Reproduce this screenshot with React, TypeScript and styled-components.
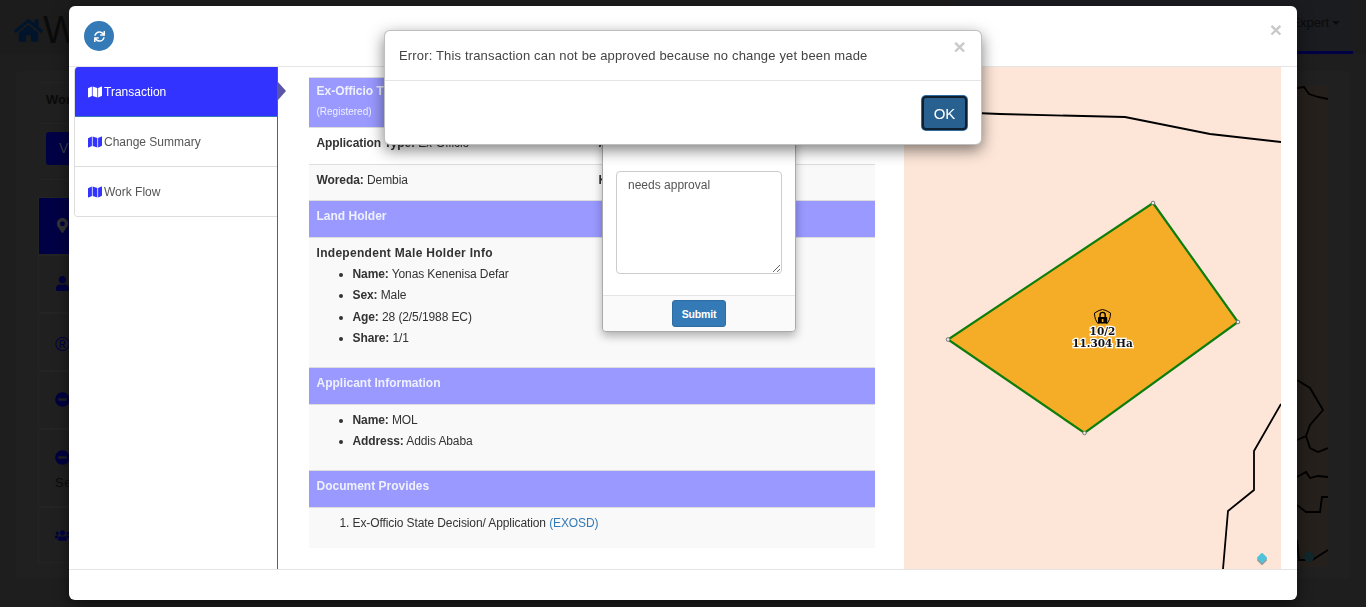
import React from 'react';
import styled, { createGlobalStyle } from 'styled-components';
import {
  FaHome,
  FaMap,
  FaMapMarkerAlt,
  FaMinusCircle,
  FaSync,
  FaUser,
  FaUsers,
} from 'react-icons/fa';

const GlobalStyle = createGlobalStyle`
  html, body {
    margin: 0;
    height: 100%;
    background: #1e1e1e;
    font-family: "Liberation Sans", Arial, sans-serif;
    font-size: 12px;
    color: #333;
  }
  * { box-sizing: border-box; }
`;

/* page behind the dialogs, dimmed */
const Page = styled.div`
  height: 100vh;
  overflow: hidden;
  display: flex;
  flex-direction: column;
`;

const TopBar = styled.div`
  height: 54px;
  flex: none;
  display: flex;
  justify-content: space-between;
  background: #1c1c1c;
  padding: 0 13px 0 14px;
`;

const Brand = styled.div`
  display: flex;
  align-items: center;
  color: #0b0b0b;
  font-size: 38px;
  line-height: 1;
  padding-top: 6px;
  svg { color: #00152b; font-size: 29px; }
`;

const UserMenu = styled.div`
  display: flex;
  align-items: center;
  justify-content: flex-end;
  width: 400px;
  background: #1a1c20;
  border-bottom: 3px solid #000045;
  color: #0b0b0b;
  font-size: 13px;
  padding: 0 13px 6px 0;
  gap: 3px;
`;

const Caret = styled.span`
  width: 0;
  height: 0;
  border-left: 4px solid transparent;
  border-right: 4px solid transparent;
  border-top: 4px solid #0b0b0b;
`;

const PageCard = styled.div`
  flex: none;
  height: 507px;
  margin: 17px 16px 0;
  padding: 11px 22px;
  background: #202020;
  border-radius: 4px;
  display: flex;
  justify-content: space-between;
`;

const PageLeft = styled.div`
  width: 500px;
`;

const PageTitle = styled.div`
  height: 41px;
  border-top: 1px solid #242424;
  padding: 9px 8px;
  font-size: 13px;
  font-weight: bold;
  color: #0b0b0b;
`;

const PageTools = styled.div`
  height: 57px;
  border-top: 1px solid #242424;
  border-bottom: 1px solid #242424;
  padding: 8px;
`;

const PageButton = styled.div`
  width: 80px;
  height: 33px;
  background: #000045;
  border-radius: 3px;
  color: #3a3a4a;
  font-size: 14px;
  line-height: 33px;
  padding-left: 13px;
`;

const SideList = styled.div`
  margin-top: 17px;
`;

const SideRow = styled.div<{ $h: number; $active?: boolean }>`
  height: ${(p) => p.$h}px;
  background: ${(p) => (p.$active ? '#000045' : '#202020')};
  border: 1px solid #242424;
  padding: 20px 16px 0;
  color: ${(p) => (p.$active ? '#333' : '#000040')};
  font-size: 15px;
  display: flex;
  flex-wrap: wrap;
  align-content: flex-start;
`;

const RegMark = styled.span`
  font-size: 20px;
  line-height: 1;
`;

const SideNote = styled.div`
  width: 100%;
  margin-top: 10px;
  font-size: 13px;
  letter-spacing: 0.5px;
  color: #0b0b0b;
`;

const PageMap = styled.div`
  width: 428px;
  height: 481px;
  margin-top: 4px;
  background: #25201c;
  svg { display: block; }
`;

/* big transaction dialog */
const Modal = styled.div`
  position: fixed;
  left: 69px;
  top: 6px;
  width: 1228px;
  height: 594px;
  background: #fff;
  border-radius: 6px;
  box-shadow: 0 5px 15px rgba(0, 0, 0, 0.5);
  display: flex;
  flex-direction: column;
`;

const ModalHead = styled.div`
  height: 61px;
  flex: none;
  border-bottom: 1px solid #e5e5e5;
  padding: 15px;
  display: flex;
  justify-content: space-between;
`;

const RoundButton = styled.div`
  width: 30px;
  height: 30px;
  border-radius: 50%;
  background: #337ab7;
  color: #fff;
  font-size: 11px;
  display: flex;
  align-items: center;
  justify-content: center;
`;

const Close = styled.span`
  font-size: 21px;
  font-weight: bold;
  line-height: 18px;
  color: #c9c9c9;
`;

const AlertClose = styled(Close)`
  margin: -9px 1px 0 0;
`;

const ModalBody = styled.div`
  flex: 1;
  min-height: 0;
  display: flex;
`;

const TabColumn = styled.div`
  position: relative;
  width: 209px;
  flex: none;
  padding-left: 5px;
  border-right: 1px solid #5a55a8;
`;

const TabArrow = styled.span`
  position: absolute;
  right: -9px;
  top: 15px;
  width: 0;
  height: 0;
  border-top: 9px solid transparent;
  border-bottom: 9px solid transparent;
  border-left: 8px solid #5a55a8;
`;

const Tabs = styled.div`
  width: 203px;
  border: 1px solid #ddd;
  border-top: none;
  border-right: none;
  border-radius: 4px 0 0 4px;
  overflow: hidden;
`;

const Tab = styled.div<{ $active?: boolean }>`
  height: 50px;
  display: flex;
  align-items: center;
  gap: 2px;
  padding-left: 13px;
  font-size: 12px;
  color: ${(p) => (p.$active ? '#fff' : '#555')};
  background: ${(p) => (p.$active ? '#3333ff' : '#fff')};
  border-bottom: ${(p) => (p.$active ? '1px solid #337ab7' : '1px solid #ddd')};
  &:last-child { border-bottom: none; height: 49px; }
  svg { font-size: 14px; color: ${(p) => (p.$active ? '#fff' : '#3333ff')}; }
`;

const Detail = styled.div`
  width: 566px;
  flex: none;
  margin: 10px 29px 0 31px;
  line-height: 17px;
`;

const BandTitle = styled.div<{ $tall?: boolean }>`
  height: ${(p) => (p.$tall ? '50px' : '36.67px')};
  background: #9999ff;
  border-top: 1px solid #ddd;
  padding: ${(p) => (p.$tall ? '5px' : '7px')} 7.5px 0;
  color: #eef0ff;
  font-weight: bold;
`;

const BandNote = styled.div`
  margin-top: 4px;
  font-size: 10px;
  font-weight: normal;
  line-height: 15px;
`;

const InfoRow = styled.div<{ $striped?: boolean }>`
  height: 36.67px;
  display: grid;
  grid-template-columns: 282px 1fr;
  border-top: 1px solid #ddd;
  padding: 7px 7.5px 0;
  background: ${(p) => (p.$striped ? '#f9f9f9' : '#fff')};
  color: #333;
  letter-spacing: -0.08px;
`;

const Block = styled.div<{ $h: number; $top: number }>`
  height: ${(p) => p.$h}px;
  background: #f9f9f9;
  border-top: 1px solid #ddd;
  padding: ${(p) => p.$top}px 7.5px 0;
  color: #333;
  letter-spacing: -0.1px;
`;

const HolderHeading = styled.div`
  font-weight: bold;
  letter-spacing: 0.3px;
  margin-bottom: 2px;
`;

const List = styled.ul`
  margin: 0;
  padding-left: 36px;
  line-height: 21.3px;
`;

const NumberList = styled.ol`
  margin: 0;
  padding-left: 36px;
  line-height: 21px;
`;

const DocCode = styled.span`
  color: #337ab7;
`;

const MapPanel = styled.div`
  width: 377px;
  flex: none;
  background: #fde6d8;
  overflow: hidden;
  svg { display: block; }
`;

const ModalFoot = styled.div`
  height: 31px;
  flex: none;
  border-top: 1px solid #e5e5e5;
`;

/* comment popup over the transaction dialog */
const CommentBox = styled.div`
  position: fixed;
  left: 602px;
  top: 100px;
  width: 194px;
  height: 232px;
  background: #fff;
  border: 1px solid #aaa;
  border-radius: 4px;
  box-shadow: 0 4px 10px rgba(0, 0, 0, 0.3);
  display: flex;
  flex-direction: column;
`;

const CommentBody = styled.div`
  flex: 1;
  padding: 70px 13px 0;
`;

const CommentInput = styled.textarea`
  display: block;
  width: 166px;
  height: 103px;
  margin: 0;
  padding: 5px 11px;
  border: 1px solid #ccc;
  border-radius: 4px;
  font-family: inherit;
  font-size: 12px;
  line-height: 17px;
  color: #555;
  resize: vertical;
  outline: none;
`;

const CommentFoot = styled.div`
  height: 36px;
  flex: none;
  border-top: 1px solid #e5e5e5;
  background: #fafafa;
  border-radius: 0 0 4px 4px;
  display: flex;
  justify-content: center;
  padding-top: 4px;
`;

const SubmitButton = styled.button`
  width: 54px;
  height: 27px;
  padding: 0;
  border: 1px solid #2e6da4;
  border-radius: 3px;
  background: #337ab7;
  color: #fff;
  font-family: inherit;
  font-size: 10.5px;
  font-weight: bold;
  letter-spacing: -0.15px;
`;

/* error message on top of everything */
const AlertBox = styled.div`
  position: fixed;
  left: 384px;
  top: 30px;
  width: 598px;
  height: 115px;
  background: #fff;
  border: 1px solid rgba(0, 0, 0, 0.25);
  border-radius: 6px;
  box-shadow: 0 5px 15px rgba(0, 0, 0, 0.5);
`;

const AlertHead = styled.div`
  height: 50px;
  border-bottom: 1px solid #e5e5e5;
  padding: 16px 14px;
  display: flex;
  justify-content: space-between;
  font-size: 13px;
  line-height: 17px;
  letter-spacing: 0.16px;
  color: #444;
`;

const AlertFoot = styled.div`
  display: flex;
  justify-content: flex-end;
  padding: 15px 14px;
`;

const OkButton = styled.button`
  width: 45px;
  height: 34px;
  padding: 0;
  background: #286090;
  border: 2px solid #10202e;
  border-radius: 4px;
  box-shadow: 0 0 0 1px #2e6da4;
  color: #fff;
  font-family: inherit;
  font-size: 15px;
`;

const MapLine = styled.polyline`
  fill: none;
  stroke: #000;
  stroke-width: 1.8;
`;

const Vertex = styled.circle`
  fill: #eee;
  stroke: #777;
  stroke-width: 1;
`;

const ParcelLabel = styled.text`
  font-family: "DejaVu Serif", serif;
  font-size: 10.5px;
  font-weight: bold;
  fill: #111;
  stroke: #fff;
  stroke-width: 2.5px;
  paint-order: stroke;
  text-anchor: middle;
`;

const backLines = [
  '1290,89 1304,87 1309,94 1318,97 1328,99',
  '1297,380 1310,388 1323,410 1310,425 1306,436 1297,440',
  '1306,436 1310,448 1318,452 1328,448',
  '1297,477 1306,472 1310,478 1318,476 1328,477',
  '1297,505 1306,512 1320,512 1322,497 1328,497',
  '1297,540 1299,560 1312,560 1328,550',
];

const frontLines = [
  '904,110 1000,114 1125,117 1210,134 1281,142',
  '1281,404 1254,451 1254,490 1228,511 1223,569',
];

const vertices = [
  [1153, 203],
  [1238, 322],
  [1084.5, 433],
  [948, 339.5],
];

export default function App() {
  return (
    <>
      <GlobalStyle />
      <Page>
        <TopBar>
          <Brand>
            <FaHome />W
          </Brand>
          <UserMenu>
            Expert <Caret />
          </UserMenu>
        </TopBar>
        <PageCard>
          <PageLeft>
            <PageTitle>Work</PageTitle>
            <PageTools>
              <PageButton>V</PageButton>
            </PageTools>
            <SideList>
              <SideRow $h={58} $active>
                <FaMapMarkerAlt />
              </SideRow>
              <SideRow $h={58}>
                <FaUser />
              </SideRow>
              <SideRow $h={58}>
                <RegMark>®</RegMark>
              </SideRow>
              <SideRow $h={58}>
                <FaMinusCircle />
              </SideRow>
              <SideRow $h={78}>
                <FaMinusCircle />
                <SideNote>Se</SideNote>
              </SideRow>
              <SideRow $h={56}>
                <FaUsers />
              </SideRow>
            </SideList>
          </PageLeft>
          <PageMap>
            <svg width="428" height="481" viewBox="900 86 428 481">
              {backLines.map((pts) => (
                <MapLine key={pts} points={pts} />
              ))}
              <circle cx="1309" cy="557" r="5" fill="#10282c" />
            </svg>
          </PageMap>
        </PageCard>
      </Page>

      <Modal>
        <ModalHead>
          <RoundButton>
            <FaSync />
          </RoundButton>
          <Close>×</Close>
        </ModalHead>
        <ModalBody>
          <TabColumn>
            <Tabs>
              <Tab $active>
                <FaMap /> Transaction
              </Tab>
              <Tab>
                <FaMap /> Change Summary
              </Tab>
              <Tab>
                <FaMap /> Work Flow
              </Tab>
            </Tabs>
            <TabArrow />
          </TabColumn>
          <Detail>
            <BandTitle $tall>
              Ex-Officio Transaction
              <BandNote>(Registered)</BandNote>
            </BandTitle>
            <InfoRow>
              <div>
                <b>Application Type:</b> Ex-Officio
              </div>
              <div>
                <b>A</b>
              </div>
            </InfoRow>
            <InfoRow $striped>
              <div>
                <b>Woreda:</b> Dembia
              </div>
              <div>
                <b>K</b>
              </div>
            </InfoRow>
            <BandTitle>Land Holder</BandTitle>
            <Block $h={130.3} $top={7}>
              <HolderHeading>Independent Male Holder Info</HolderHeading>
              <List>
                <li>
                  <b>Name:</b> Yonas Kenenisa Defar
                </li>
                <li>
                  <b>Sex:</b> Male
                </li>
                <li>
                  <b>Age:</b> 28 (2/5/1988 EC)
                </li>
                <li>
                  <b>Share:</b> 1/1
                </li>
              </List>
            </Block>
            <BandTitle>Applicant Information</BandTitle>
            <Block $h={66.3} $top={5}>
              <List>
                <li>
                  <b>Name:</b> MOL
                </li>
                <li>
                  <b>Address:</b> Addis Ababa
                </li>
              </List>
            </Block>
            <BandTitle>Document Provides</BandTitle>
            <Block $h={41} $top={5}>
              <NumberList>
                <li>
                  Ex-Officio State Decision/ Application <DocCode>(EXOSD)</DocCode>
                </li>
              </NumberList>
            </Block>
          </Detail>
          <MapPanel>
            <svg width="377" height="502" viewBox="904 67 377 502">
              {frontLines.map((pts) => (
                <MapLine key={pts} points={pts} />
              ))}
              <polygon
                points="1153,203 1238,322 1084.5,433 948,339.5"
                fill="#f5ad27"
                stroke="#0d7d0d"
                strokeWidth="2.2"
              />
              {vertices.map(([x, y]) => (
                <Vertex key={x} cx={x} cy={y} r="1.8" />
              ))}
              {/* lock with shield */}
              <path
                d="M1094.5 313 L1099 310.5 L1102.5 309.5 L1106 310.5 L1110.5 313 C1110.5 318 1109 321.5 1106.5 324 M1094.5 313 C1094.5 318 1096 321.5 1098.5 324"
                fill="none"
                stroke="#000"
                strokeWidth="1"
              />
              <path
                d="M1100 317 V315 A2.6 2.6 0 0 1 1105.2 315 V317"
                fill="none"
                stroke="#000"
                strokeWidth="1.4"
              />
              <rect x="1098" y="317" width="9.2" height="6.5" rx="0.8" fill="#000" />
              <rect x="1101.8" y="319" width="1.6" height="3" fill="#f5ad27" />
              <ParcelLabel x="1102.5" y="335">
                10/2
              </ParcelLabel>
              <ParcelLabel x="1102.5" y="347">
                11.304 Ha
              </ParcelLabel>
              {/* map marker bottom right */}
              <polygon
                points="1262,556 1266,560 1262,564 1258,560"
                fill="#9a9a9a"
                stroke="#9a9a9a"
                strokeWidth="2"
                strokeLinejoin="round"
              />
              <polygon
                points="1262,554 1266,558 1262,562 1258,558"
                fill="#4fc3d9"
                stroke="#4fc3d9"
                strokeWidth="2"
                strokeLinejoin="round"
              />
            </svg>
          </MapPanel>
        </ModalBody>
        <ModalFoot />
      </Modal>

      <CommentBox>
        <CommentBody>
          <CommentInput defaultValue="needs approval" />
        </CommentBody>
        <CommentFoot>
          <SubmitButton>Submit</SubmitButton>
        </CommentFoot>
      </CommentBox>

      <AlertBox>
        <AlertHead>
          Error: This transaction can not be approved because no change yet been made
          <AlertClose>×</AlertClose>
        </AlertHead>
        <AlertFoot>
          <OkButton>OK</OkButton>
        </AlertFoot>
      </AlertBox>
    </>
  );
}
